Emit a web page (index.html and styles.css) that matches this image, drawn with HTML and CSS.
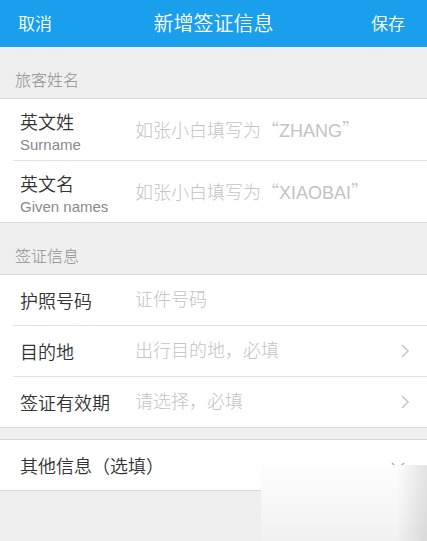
FILE: index.html
```html
<!DOCTYPE html>
<html lang="zh-CN">
<head>
<meta charset="utf-8">
<title>新增签证信息</title>
<link rel="stylesheet" href="styles.css">
</head>
<body>
<header class="nav">
  <span class="nav-btn">取消</span>
  <span class="nav-title">新增签证信息</span>
  <span class="nav-btn">保存</span>
</header>

<div class="section-label">旅客姓名</div>
<div class="group">
  <div class="row row-name">
    <div class="label-2">
      <div class="label-cn">英文姓</div>
      <div class="label-en">Surname</div>
    </div>
    <div class="placeholder">如张小白填写为<span class="q">“</span>ZHANG<span class="q">”</span></div>
  </div>
  <div class="row row-name">
    <div class="label-2">
      <div class="label-cn">英文名</div>
      <div class="label-en">Given names</div>
    </div>
    <div class="placeholder">如张小白填写为<span class="q">“</span>XIAOBAI<span class="q">”</span></div>
  </div>
</div>

<div class="section-label">签证信息</div>
<div class="group">
  <div class="row">
    <div class="label">护照号码</div>
    <div class="placeholder">证件号码</div>
  </div>
  <div class="row">
    <div class="label">目的地</div>
    <div class="placeholder">出行目的地，必填</div>
    <svg class="chev" width="10" height="16" viewBox="0 0 10 16"><polyline points="2,2 8,8 2,14" fill="none" stroke="#c7c7c7" stroke-width="1.6"/></svg>
  </div>
  <div class="row">
    <div class="label">签证有效期</div>
    <div class="placeholder">请选择，必填</div>
    <svg class="chev" width="10" height="16" viewBox="0 0 10 16"><polyline points="2,2 8,8 2,14" fill="none" stroke="#c7c7c7" stroke-width="1.6"/></svg>
  </div>
</div>

<div class="spacer"></div>
<div class="group">
  <div class="row">
    <div class="label label-wide">其他信息（选填）</div>
    <svg class="chev-down" width="14" height="10" viewBox="0 0 14 10"><polyline points="1,2 7,8 13,2" fill="none" stroke="#a8a8a8" stroke-width="1.4"/></svg>
  </div>
</div>

<div class="watermark"></div>
</body>
</html>
```

FILE: styles.css
```css
html, body {
  margin: 0;
  padding: 0;
}
body {
  background: #efefef;
  font-family: "Liberation Sans", "Noto Sans CJK SC", sans-serif;
  width: 427px;
  height: 541px;
  overflow: hidden;
  position: relative;
}
.nav {
  height: 47px;
  background: #1a9fec;
  color: #fff;
  display: flex;
  align-items: center;
  justify-content: space-between;
  padding: 0 22px 3px 18px;
  box-sizing: border-box;
  font-weight: 350;
}
.nav-btn {
  font-size: 17px;
}
.nav-title {
  font-size: 20px;
  margin-left: 4px;
}
.section-label {
  height: 51px;
  box-sizing: border-box;
  display: flex;
  align-items: flex-end;
  padding: 0 0 9px 15px;
  font-size: 16px;
  line-height: 20px;
  color: #8e8e8e;
  font-family: "Noto Sans CJK SC", sans-serif;
  font-weight: 300;
}
.group {
  background: #fff;
  border-top: 1px solid #d9d9d9;
  border-bottom: 1px solid #d9d9d9;
}
.row {
  margin-left: 13px;
  padding-left: 7px;
  height: 50px;
  display: flex;
  align-items: center;
  border-bottom: 1px solid #e2e2e2;
}
.row:last-child {
  border-bottom: none;
}
.row-name {
  height: 61px;
}
.label, .label-2 {
  width: 115px;
  flex: none;
}
.label {
  font-size: 18px;
  color: #333;
  font-family: "Noto Sans CJK SC", sans-serif;
  font-weight: 350;
  line-height: 24px;
}
.label-wide {
  width: auto;
}
.label-2 {
  align-self: flex-start;
  padding-top: 10px;
}
.label-cn {
  font-size: 18px;
  line-height: 24px;
  color: #333;
  font-family: "Noto Sans CJK SC", sans-serif;
  font-weight: 350;
}
.label-en {
  font-size: 15px;
  line-height: 24px;
  color: #8a8a8a;
}
.placeholder {
  font-size: 18px;
  color: #c3c3c3;
  line-height: 24px;
  white-space: nowrap;
  font-weight: 300;
}
.q {
  font-family: "Noto Sans CJK SC", sans-serif;
}
.chev {
  margin-left: auto;
  margin-right: 17px;
}
.chev-down {
  margin-left: auto;
  margin-right: 22px;
  margin-top: 2px;
}
.spacer {
  height: 11px;
}
.watermark {
  position: absolute;
  left: 261px;
  top: 465px;
  right: 0;
  bottom: 0;
  background:
    linear-gradient(to right, rgba(0,0,0,0) 82%, rgba(0,0,0,0.1) 100%),
    linear-gradient(to bottom, #fdfdfd 0%, #f6f6f6 60%, #f1f1f1 100%);
}
```
